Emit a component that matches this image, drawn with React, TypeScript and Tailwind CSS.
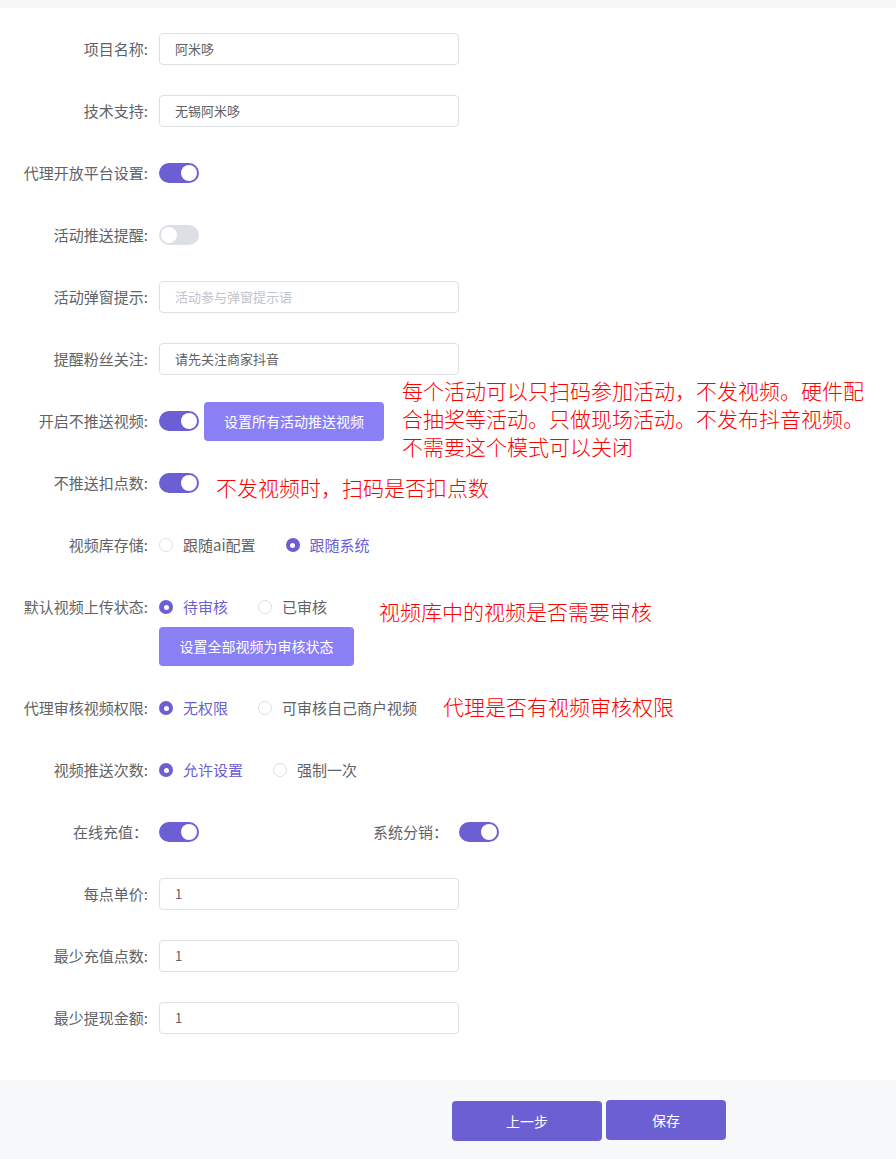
import type { ReactNode } from 'react'

const PURPLE = 'bg-[#6c5fd3]'

function Label({ children }: { children: ReactNode }) {
  return (
    <div className="w-[159px] h-10 shrink-0 pr-[11px] flex items-center justify-end text-[15px] text-[#606266] whitespace-nowrap">
      {children}
    </div>
  )
}

function Toggle({ on = true }: { on?: boolean }) {
  return (
    <div
      className={`w-10 h-5 rounded-full p-[2px] flex shrink-0 ${on ? `${PURPLE} justify-end` : 'bg-[#dcdfe6] justify-start'}`}
    >
      <div className="w-4 h-4 rounded-full bg-white" />
    </div>
  )
}

function Input({ value, placeholder }: { value?: string; placeholder?: string }) {
  return (
    <div className="w-[300px] h-8 border border-[#dcdfe6] rounded px-[15px] flex items-center text-[13px]">
      {value ? <span className="text-[#606266]">{value}</span> : <span className="text-[#c0c4cc]">{placeholder}</span>}
    </div>
  )
}

function Radio({ label, checked = false }: { label: string; checked?: boolean }) {
  return (
    <div className="flex items-center">
      {checked ? (
        <span className="w-[14px] h-[14px] rounded-full bg-[#6c5fd3] flex items-center justify-center">
          <span className="w-[5px] h-[5px] rounded-full bg-white" />
        </span>
      ) : (
        <span className="w-[14px] h-[14px] rounded-full border border-[#dcdfe6] bg-white" />
      )}
      <span className={`pl-[10px] text-[15px] ${checked ? 'text-[#6c5fd3]' : 'text-[#606266]'}`}>{label}</span>
    </div>
  )
}

function Row({ children }: { children: ReactNode }) {
  return <div className="flex items-center h-10 mb-[22px]">{children}</div>
}

const note = 'text-[21px] leading-[28px] font-light text-[#ff0000] whitespace-nowrap'

export default function App() {
  return (
    <div className="min-h-screen bg-white font-['Noto_Sans_CJK_SC',sans-serif]">
      <div className="h-2 bg-[#f5f6f8]" />

      <div className="pt-[21px] pb-5">
        <Row>
          <Label>项目名称:</Label>
          <Input value="阿米哆" />
        </Row>
        <Row>
          <Label>技术支持:</Label>
          <Input value="无锡阿米哆" />
        </Row>
        <Row>
          <Label>代理开放平台设置:</Label>
          <Toggle />
        </Row>
        <Row>
          <Label>活动推送提醒:</Label>
          <Toggle on={false} />
        </Row>
        <Row>
          <Label>活动弹窗提示:</Label>
          <Input placeholder="活动参与弹窗提示语" />
        </Row>
        <Row>
          <Label>提醒粉丝关注:</Label>
          <Input value="请先关注商家抖音" />
        </Row>
        <Row>
          <Label>开启不推送视频:</Label>
          <Toggle />
          <button className="ml-[5px] w-[180px] h-[39px] rounded bg-[#8b7ff6] text-white text-[14px]">
            设置所有活动推送视频
          </button>
          <p className={`ml-[18px] mb-[6px] ${note}`}>
            每个活动可以只扫码参加活动，不发视频。硬件配
            <br />
            合抽奖等活动。只做现场活动。不发布抖音视频。
            <br />
            不需要这个模式可以关闭
          </p>
        </Row>
        <Row>
          <Label>不推送扣点数:</Label>
          <Toggle />
          <p className={`ml-[17px] mt-[8px] ${note}`}>不发视频时，扫码是否扣点数</p>
        </Row>
        <Row>
          <Label>视频库存储:</Label>
          <div className="flex items-center gap-[30px]">
            <Radio label="跟随ai配置" />
            <Radio label="跟随系统" checked />
          </div>
        </Row>

        <div className="flex items-start mb-[22px]">
          <Label>默认视频上传状态:</Label>
          <div className="flex flex-col">
            <div className="flex items-center h-10">
              <div className="flex items-center gap-[30px]">
                <Radio label="待审核" checked />
                <Radio label="已审核" />
              </div>
              <p className={`ml-[52px] mt-[8px] ${note}`}>视频库中的视频是否需要审核</p>
            </div>
            <button className="w-[195px] h-[39px] rounded bg-[#8b7ff6] text-white text-[14px]">
              设置全部视频为审核状态
            </button>
          </div>
        </div>

        <Row>
          <Label>代理审核视频权限:</Label>
          <div className="flex items-center gap-[30px]">
            <Radio label="无权限" checked />
            <Radio label="可审核自己商户视频" />
          </div>
          <p className={`ml-[26px] mb-[5px] ${note}`}>代理是否有视频审核权限</p>
        </Row>
        <Row>
          <Label>视频推送次数:</Label>
          <div className="flex items-center gap-[30px]">
            <Radio label="允许设置" checked />
            <Radio label="强制一次" />
          </div>
        </Row>
        <div className="grid grid-cols-[300px_300px] h-10 mb-[22px]">
          <div className="flex items-center">
            <Label>在线充值：</Label>
            <Toggle />
          </div>
          <div className="flex items-center">
            <Label>系统分销：</Label>
            <Toggle />
          </div>
        </div>
        <Row>
          <Label>每点单价:</Label>
          <Input value="1" />
        </Row>
        <Row>
          <Label>最少充值点数:</Label>
          <Input value="1" />
        </Row>
        <Row>
          <Label>最少提现金额:</Label>
          <Input value="1" />
        </Row>
      </div>

      <div className="bg-[#f7f8fa] h-[79px] pt-5 pl-[452px] flex items-start gap-1">
        <button className={`mt-px w-[150px] h-10 rounded ${PURPLE} text-white text-[14px]`}>上一步</button>
        <button className={`w-[120px] h-10 rounded ${PURPLE} text-white text-[14px]`}>保存</button>
      </div>
    </div>
  )
}
